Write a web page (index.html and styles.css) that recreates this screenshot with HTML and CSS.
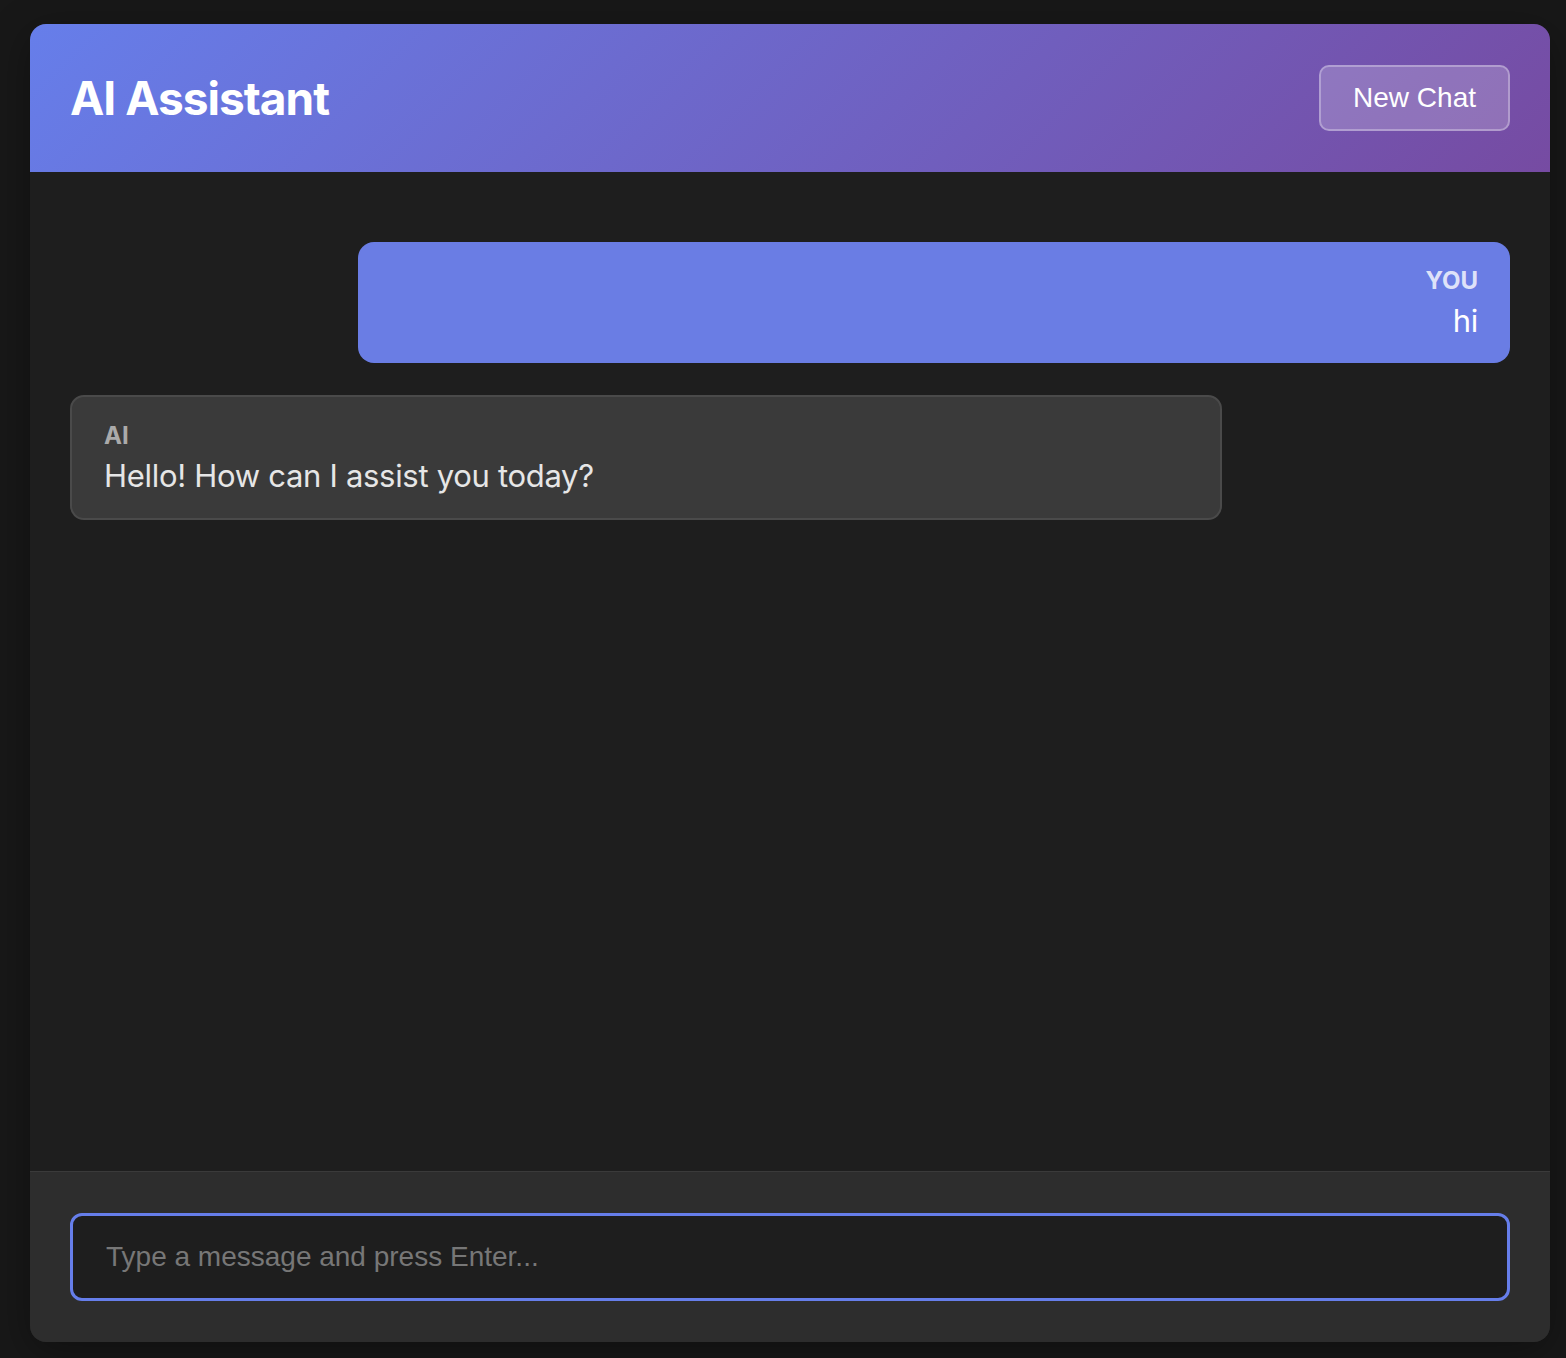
FILE: index.html
```html
<!DOCTYPE html>
<html lang="en">
<head>
    <meta charset="UTF-8">
    <meta name="viewport" content="width=device-width, initial-scale=1.0">
    <title>AI Assistant</title>
    <link rel="stylesheet" href="styles.css">
</head>
<body>
    <div class="chat">
        <div class="header">
            <h1>AI Assistant</h1>
            <button class="new-chat">New Chat</button>
        </div>

        <div class="messages">
            <div class="message user">
                <div class="label">You</div>
                <div class="text">hi</div>
            </div>
            <div class="message ai">
                <div class="label">AI</div>
                <div class="text">Hello! How can I assist you today?</div>
            </div>
        </div>

        <div class="input-area">
            <input type="text" id="inp" placeholder="Type a message and press Enter..." autofocus>
        </div>
    </div>
</body>
</html>
```

FILE: styles.css
```css
* {
    margin: 0;
    padding: 0;
    box-sizing: border-box;
}

body {
    background: #181818;
    font-family: Inter, 'Noto Sans', sans-serif;
    padding: 24px 16px 16px 30px;
}

.chat {
    width: 1520px;
    height: 1318px;
    display: flex;
    flex-direction: column;
    background: #1e1e1e;
    border-radius: 16px;
    overflow: hidden;
    box-shadow: 0 10px 40px rgba(0, 0, 0, 0.35);
}

.header {
    height: 148px;
    flex-shrink: 0;
    display: flex;
    justify-content: space-between;
    align-items: center;
    padding: 0 40px;
    background: linear-gradient(135deg, #667eea 0%, #764ba2 100%);
}

.header h1 {
    color: white;
    font-size: 46px;
    font-weight: 700;
    letter-spacing: -1px;
}

.new-chat {
    font-family: 'Liberation Sans', Arial, sans-serif;
    font-size: 28px;
    color: white;
    padding: 15px 32px;
    background: rgba(255, 255, 255, 0.2);
    border: 2px solid rgba(255, 255, 255, 0.3);
    border-radius: 10px;
    cursor: pointer;
}

.messages {
    flex: 1;
    display: flex;
    flex-direction: column;
    gap: 32px;
    padding: 70px 40px 40px;
    overflow-y: auto;
}

.message {
    width: 80%;
    padding: 25px 32px 24px;
    border-radius: 16px;
}

.message .label {
    font-size: 24px;
    font-weight: 700;
    line-height: 1.2;
    text-transform: uppercase;
    margin-bottom: 6px;
}

.message .text {
    font-size: 31px;
    line-height: 1.2;
    letter-spacing: -0.3px;
}

.user {
    align-self: flex-end;
    text-align: right;
    background: #6a7de4;
    color: white;
}

.user .label {
    color: rgba(255, 255, 255, 0.8);
}

.ai {
    align-self: flex-start;
    background: #3a3a3a;
    border: 2px solid #4a4a4a;
    border-radius: 14px;
    color: #e6e6e6;
}

.ai .label {
    color: #aaa;
}

.input-area {
    flex-shrink: 0;
    padding: 41px 40px;
    background: #2d2d2d;
    border-top: 1px solid #3a3a3a;
}

.input-area input {
    width: 100%;
    font-family: 'Liberation Sans', Arial, sans-serif;
    font-size: 28px;
    color: #e0e0e0;
    padding: 25px 33px;
    background: #1e1e1e;
    border: 3px solid #667eea;
    border-radius: 12px;
    outline: none;
}

.input-area input::placeholder {
    color: #777;
}
```
